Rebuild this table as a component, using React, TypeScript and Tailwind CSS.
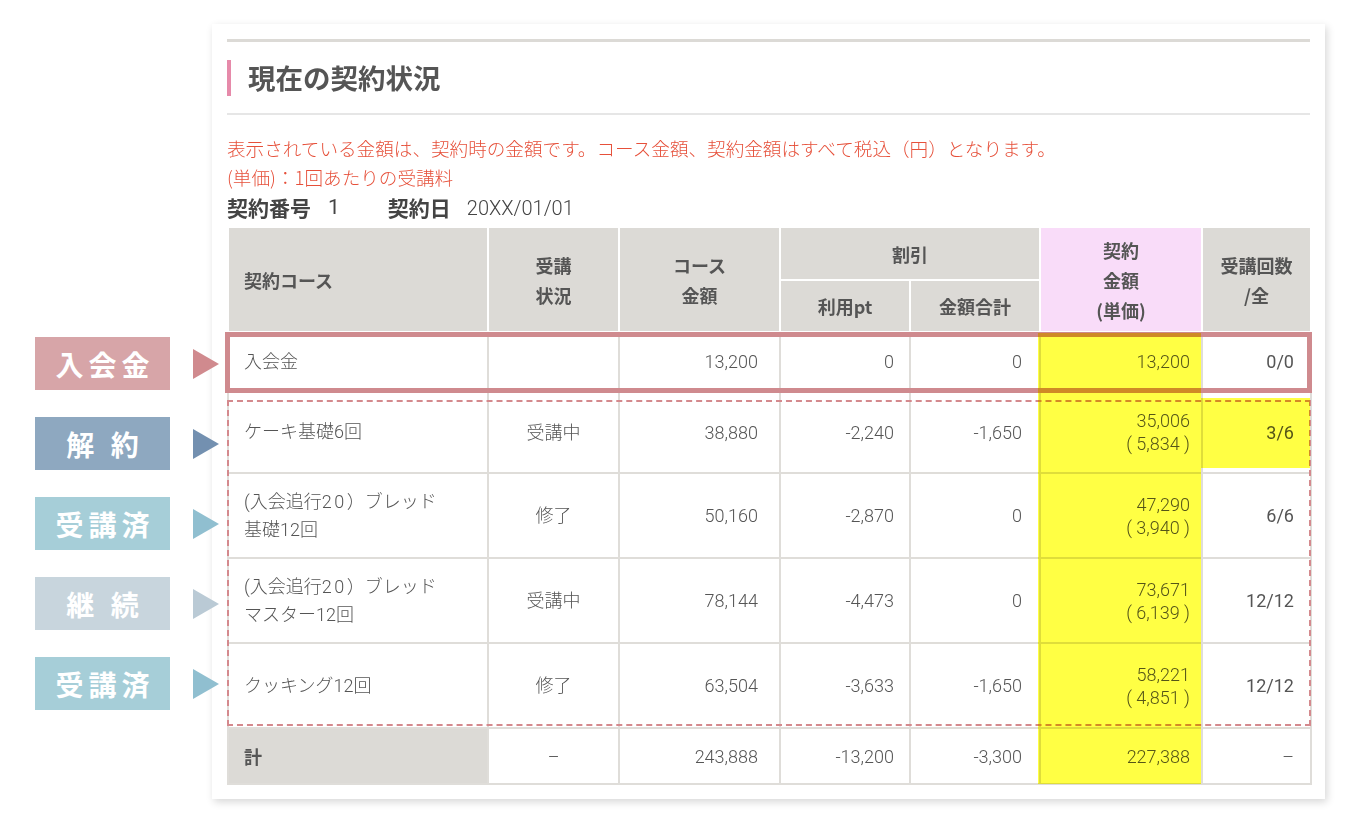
import React from "react";

type Row = {
  course: React.ReactNode[];
  status: string;
  price: string;
  pt: string;
  disc: string;
  amount: string;
  unit?: string;
  count: string;
  h: string;
};

const bread = (
  <>
    (入会追行<span className="tracking-[2.5px]">20</span>）ブレッド
  </>
);

const rows: Row[] = [
  { course: ["入会金"], status: "", price: "13,200", pt: "0", disc: "0", amount: "13,200", count: "0/0", h: "h-[59px]" },
  { course: ["ケーキ基礎6回"], status: "受講中", price: "38,880", pt: "-2,240", disc: "-1,650", amount: "35,006", unit: "( 5,834 )", count: "3/6", h: "h-[82px]" },
  { course: [bread, "基礎12回"], status: "修了", price: "50,160", pt: "-2,870", disc: "0", amount: "47,290", unit: "( 3,940 )", count: "6/6", h: "h-[85px]" },
  { course: [bread, "マスター12回"], status: "受講中", price: "78,144", pt: "-4,473", disc: "0", amount: "73,671", unit: "( 6,139 )", count: "12/12", h: "h-[85px]" },
  { course: ["クッキング12回"], status: "修了", price: "63,504", pt: "-3,633", disc: "-1,650", amount: "58,221", unit: "( 4,851 )", count: "12/12", h: "h-[85px]" },
];

type Tag = { label: string; box: string; arrow: string };

const tags: Tag[] = [
  { label: "入会金", box: "bg-[#d7a5a8]", arrow: "#d08a8e" },
  { label: "解 約", box: "bg-[#8ea8c0]", arrow: "#7390b0" },
  { label: "受講済", box: "bg-[#a6ced8]", arrow: "#90bfd0" },
  { label: "継 続", box: "bg-[#c8d5dd]", arrow: "#bacad5" },
  { label: "受講済", box: "bg-[#a6ced8]", arrow: "#90bfd0" },
];

const th = "border-2 border-white bg-[#dcdad6] font-bold text-[#555] leading-[30px] text-[18px]";
const td = "border-2 border-[#dfddd9] text-[#555]";

const App = () => {
  return (
    <div className="min-h-[821px] w-[1367px] bg-white font-['Noto_Sans_CJK_JP',sans-serif] flex">
      {/* left labels */}
      <div className="relative z-10 w-[212px] shrink-0 pt-[337px] flex flex-col gap-[27px]">
        {tags.map((t, i) => (
          <div key={i} className="flex items-center">
            <div
              className={`ml-[35px] w-[135px] h-[53px] shrink-0 flex items-center justify-center text-white font-bold text-[28px] tracking-[0.18em] pl-[0.18em] ${t.box}`}
            >
              {t.label}
            </div>
            <svg width="26" height="30" viewBox="0 0 26 30" className="ml-[23px] shrink-0">
              <polygon points="0,0 26,15 0,30" fill={t.arrow} />
            </svg>
          </div>
        ))}
      </div>

      {/* card */}
      <div className="mt-[24px] mb-[24px] w-[1113px] bg-white shadow-[2px_3px_8px_rgba(0,0,0,0.16)] px-[15px] pt-[15px] pb-[14px]">
        <div className="h-[3px] bg-[#dcdad6]" />
        <div className="mt-[18px] h-[36px] border-l-4 border-[#e68aaa] pl-[17px] flex items-center">
          <h1 className="text-[27.5px] font-bold text-[#555]">現在の契約状況</h1>
        </div>
        <div className="mt-[17px] h-[2px] bg-[#e6e6e6]" />

        <div className="mt-[18px] text-[18.6px] leading-[29px] text-[#e6503a] font-light">
          <p>表示されている金額は、契約時の金額です。コース金額、契約金額はすべて税込（円）となります。</p>
          <p>(単価)：1回あたりの受講料</p>
        </div>
        <div className="mt-[2px] mb-[3px] h-[30px] flex items-center text-[21px] text-[#444]">
          <span className="font-bold">契約番号</span>
          <span className="ml-[17px] font-['Roboto','Noto_Sans_CJK_JP',sans-serif]">1</span>
          <span className="ml-[48px] font-bold">契約日</span>
          <span className="ml-[16px] text-[20px] font-light font-['Roboto','Noto_Sans_CJK_JP',sans-serif]">20XX/01/01</span>
        </div>

        <div className="relative">
          <table className="w-full table-fixed border-collapse text-[18px]">
            <colgroup>
              <col className="w-[260px]" />
              <col className="w-[131px]" />
              <col className="w-[161px]" />
              <col className="w-[130px]" />
              <col className="w-[130px]" />
              <col className="w-[162px]" />
              <col className="w-[109px]" />
            </colgroup>
            <thead>
              <tr>
                <th rowSpan={2} className={`${th} text-left pl-[15px]`}>
                  契約コース
                </th>
                <th rowSpan={2} className={`${th} text-center`}>
                  受講
                  <br />
                  状況
                </th>
                <th rowSpan={2} className={`${th} text-center`}>
                  コース
                  <br />
                  金額
                </th>
                <th colSpan={2} className={`${th} h-[53px] text-center`}>
                  割引
                </th>
                <th rowSpan={2} className={`${th} bg-[#f9dcf9] text-center`}>
                  契約
                  <br />
                  金額
                  <br />
                  (単価)
                </th>
                <th rowSpan={2} className={`${th} text-center`}>
                  受講回数
                  <br />
                  /全
                </th>
              </tr>
              <tr>
                <th className={`${th} h-[52px] text-center`}>利用pt</th>
                <th className={`${th} h-[52px] text-center`}>金額合計</th>
              </tr>
            </thead>
            <tbody className="font-['Roboto','Noto_Sans_CJK_JP',sans-serif] font-light">
              {rows.map((r, i) => (
                <tr key={i}>
                  <td className={`${td} ${r.h} pl-[15px] leading-[28px]`}>
                    {r.course.map((c, j) => (
                      <div key={j}>{c}</div>
                    ))}
                  </td>
                  <td className={`${td} text-center`}>{r.status}</td>
                  <td className={`${td} text-right pr-[21px]`}>{r.price}</td>
                  <td className={`${td} text-right pr-[15px]`}>{r.pt}</td>
                  <td className={`${td} text-right pr-[17px]`}>{r.disc}</td>
                  <td className={`${td} text-right pr-[11px] leading-[23px]`}>
                    <div>{r.amount}</div>
                    {r.unit && <div>{r.unit}</div>}
                  </td>
                  <td className={`${td} text-right pr-[16px] text-[#333] font-normal`}>{r.count}</td>
                </tr>
              ))}
              <tr>
                <td className="h-[56px] border-2 border-[#dfddd9] bg-[#dcdad6] pl-[15px] font-bold text-[#555] font-['Noto_Sans_CJK_JP',sans-serif]">
                  計
                </td>
                <td className={`${td} text-center`}>–</td>
                <td className={`${td} text-right pr-[21px]`}>243,888</td>
                <td className={`${td} text-right pr-[15px]`}>-13,200</td>
                <td className={`${td} text-right pr-[17px]`}>-3,300</td>
                <td className={`${td} text-right pr-[11px]`}>227,388</td>
                <td className={`${td} text-right pr-[16px]`}>–</td>
              </tr>
            </tbody>
          </table>

          {/* annotations */}
          <div className="absolute left-[-2px] top-[106px] w-[1087px] h-[61px] border-[5px] border-[#cf8a8e] pointer-events-none" />
          <div className="absolute left-0 top-[174px] w-[1084px] h-[326px] border-2 border-dashed border-[#d4898d] pointer-events-none" />
          <div className="absolute left-[811px] top-[107px] w-[163px] h-[451px] bg-[#ffff44] mix-blend-multiply pointer-events-none" />
          <div className="absolute left-[974px] top-[172px] w-[109px] h-[70px] bg-[#ffff44] mix-blend-multiply pointer-events-none" />
        </div>
      </div>
    </div>
  );
};

export default App;
